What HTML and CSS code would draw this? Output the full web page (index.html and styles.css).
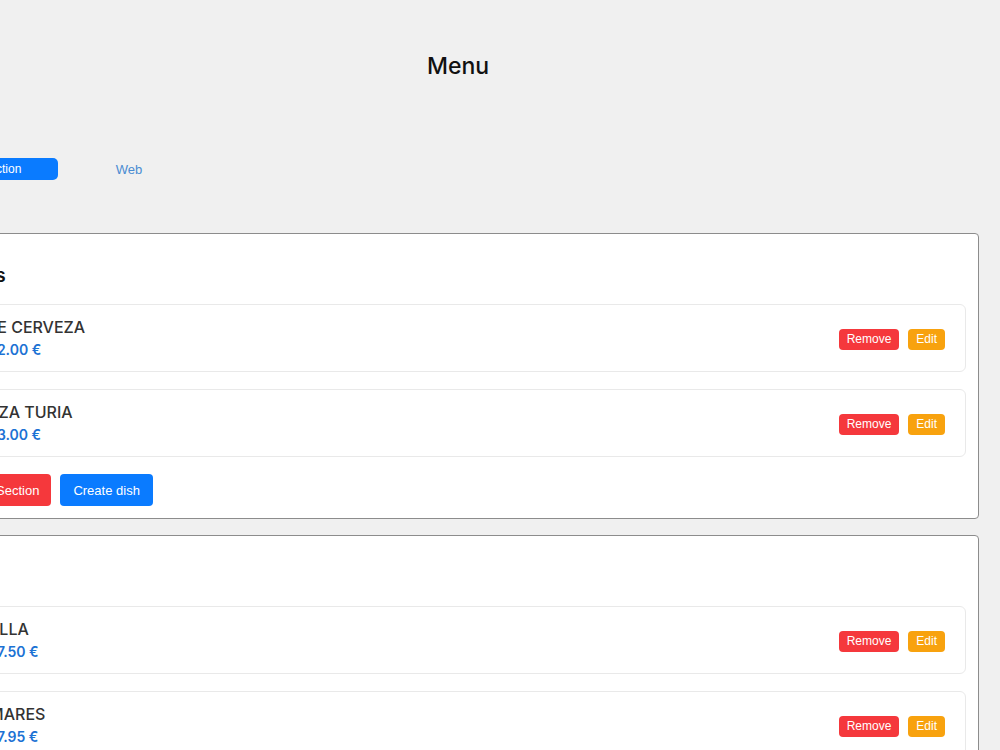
FILE: index.html
```html
<!DOCTYPE html>
<html lang="en">
<head>
    <meta charset="UTF-8">
    <meta name="viewport" content="width=device-width, initial-scale=1.0">
    <title>Menu</title>
    <link rel="stylesheet" href="styles.css">
</head>
<body>
    <div class="page">
        <h1>Menu</h1>

        <div class="tabs">
            <button class="tab active">Add Section</button>
            <button class="tab">Web</button>
        </div>

        <div class="section-card">
            <h2>Bebidas</h2>
            <div class="dish">
                <div class="dish-info">
                    <p class="dish-name">MINI DE CERVEZA</p>
                    <p class="dish-price">Precio: 2.00 €</p>
                </div>
                <div class="dish-actions">
                    <button class="btn-small remove">Remove</button>
                    <button class="btn-small edit">Edit</button>
                </div>
            </div>
            <div class="dish">
                <div class="dish-info">
                    <p class="dish-name">CERVEZA TURIA</p>
                    <p class="dish-price">Precio: 3.00 €</p>
                </div>
                <div class="dish-actions">
                    <button class="btn-small remove">Remove</button>
                    <button class="btn-small edit">Edit</button>
                </div>
            </div>
            <div class="section-actions">
                <button class="btn delete">Remove Section</button>
                <button class="btn create">Create dish</button>
            </div>
        </div>

        <div class="section-card">
            <h2>Platos</h2>
            <div class="dish">
                <div class="dish-info">
                    <p class="dish-name">MORCILLA</p>
                    <p class="dish-price">Precio: 7.50 €</p>
                </div>
                <div class="dish-actions">
                    <button class="btn-small remove">Remove</button>
                    <button class="btn-small edit">Edit</button>
                </div>
            </div>
            <div class="dish">
                <div class="dish-info">
                    <p class="dish-name">CALAMARES</p>
                    <p class="dish-price">Precio: 7.95 €</p>
                </div>
                <div class="dish-actions">
                    <button class="btn-small remove">Remove</button>
                    <button class="btn-small edit">Edit</button>
                </div>
            </div>
            <div class="section-actions">
                <button class="btn delete">Remove Section</button>
                <button class="btn create">Create dish</button>
            </div>
        </div>
    </div>
</body>
</html>
```

FILE: styles.css
```css
body {
    margin: 0;
    padding: 0;
    background-color: #f0f0f0;
    font-family: Inter, "Liberation Sans", Arial, sans-serif;
    color: #333;
    overflow: hidden;
}

.page {
    width: 1084px;
    margin-left: -84px;
}

h1 {
    margin: 0;
    padding-top: 51px;
    height: 30px;
    line-height: 30px;
    text-align: center;
    font-size: 23px;
    font-weight: 500;
    color: #111;
}

.tabs {
    display: flex;
    margin-top: 77px;
    margin-bottom: 53px;
}

.tab {
    width: 142px;
    height: 22px;
    padding: 0;
    border: none;
    border-radius: 5px;
    background: transparent;
    color: #4a8cd2;
    font-family: "Liberation Sans", Arial, sans-serif;
    font-size: 13px;
    cursor: pointer;
}

.tab.active {
    padding-left: 4px;
    background-color: #0a7bff;
    color: #fff;
    font-size: 12px;
}

.section-card {
    margin: 0 21px 16px 3px;
    padding: 12px;
    background: #fff;
    border: 1px solid #8c8c8c;
    border-radius: 4px;
    display: flex;
    flex-direction: column;
    gap: 17px;
}

.section-card h2 {
    margin: 18px 0 -1px 0;
    height: 24px;
    line-height: 24px;
    font-size: 19px;
    font-weight: 600;
    color: #111;
}

.dish {
    display: flex;
    justify-content: space-between;
    align-items: center;
    padding: 11px 20px 9px 13px;
    border: 1px solid #e9e9e9;
    border-radius: 6px;
    background: #fff;
}

.dish-info p {
    margin: 0;
}

.dish-name {
    line-height: 22px;
    font-size: 16px;
    font-weight: 500;
    color: #333;
}

.dish-price {
    line-height: 24px;
    font-size: 14px;
    font-weight: 600;
    color: #1c72d4;
}

.dish-actions {
    display: flex;
    gap: 9px;
}

.btn-small {
    height: 21px;
    padding: 0 8px;
    border: none;
    border-radius: 4px;
    color: #fff;
    font-family: "Liberation Sans", Arial, sans-serif;
    font-size: 12px;
    cursor: pointer;
}

.btn-small.remove {
    background-color: #f5383c;
}

.btn-small.edit {
    background-color: #f8a20e;
}

.section-actions {
    display: flex;
    gap: 9px;
}

.btn {
    height: 32px;
    padding: 0 13px;
    border: none;
    border-radius: 4px;
    color: #fff;
    font-family: "Liberation Sans", Arial, sans-serif;
    font-size: 13px;
    cursor: pointer;
}

.btn.delete {
    padding: 0 12px;
    background-color: #f5383c;
}

.btn.create {
    background-color: #0a7bff;
}
```
